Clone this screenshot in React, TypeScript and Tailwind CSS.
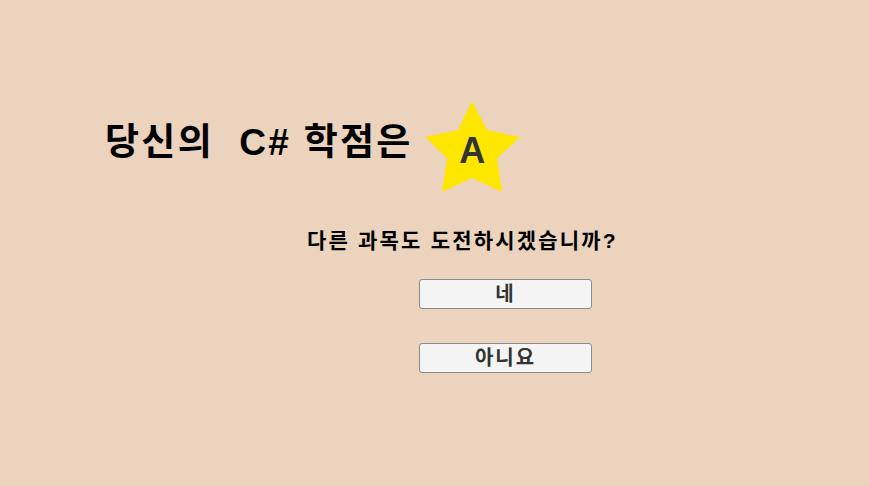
export default function App() {
    return (
        <div className="w-[869px] h-[486px] bg-[#ebd3bd] overflow-hidden font-['Liberation_Sans','Noto_Sans_CJK_KR',sans-serif] text-black">
            {/* Title */}
            <div className="flex items-center pt-[101px] pl-[105px]">
                <h1 className="text-[37px] font-bold leading-none tracking-[2.3px] mt-[-10px] whitespace-pre">당신의  C# 학점은</h1>
                <div className="relative ml-[12px] w-[95px] h-[92px] flex items-center justify-center">
                    <svg viewBox="0 0 95 92" className="absolute inset-0 w-full h-full">
                        <polygon points="47,0 62,29 95,36 72,57 77,91 47,77 17,91 22,57 0,36 33,29" fill="#ffe600" />
                    </svg>
                    <span className="relative text-[36px] font-bold text-[#333333] leading-none mt-[8px]">A</span>
                </div>
            </div>

            {/* Question */}
            <p className="mt-[34px] ml-[307px] text-[21px] font-bold leading-7 tracking-[2.2px]">다른 과목도 도전하시겠습니까?</p>

            {/* Buttons */}
            <div className="ml-[419px] mt-[24px] flex flex-col gap-[34px]">
                <button className="w-[173px] h-[30px] bg-[#f4f4f4] border border-[#8c8c8c] rounded-[3px] text-[20px] font-bold text-[#333333] leading-none tracking-[2px]">
                    네
                </button>
                <button className="w-[173px] h-[30px] bg-[#f4f4f4] border border-[#8c8c8c] rounded-[3px] text-[20px] font-bold text-[#333333] leading-none tracking-[2px]">
                    아니요
                </button>
            </div>
        </div>
    );
}
